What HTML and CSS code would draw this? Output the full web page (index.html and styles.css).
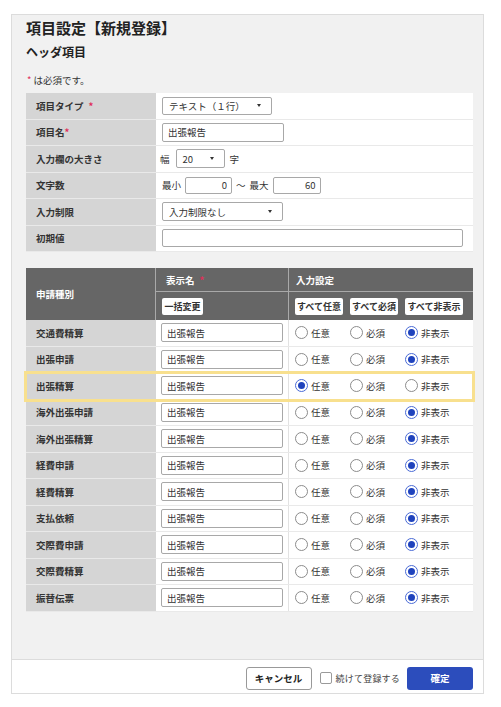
FILE: index.html
```html
<html lang="ja"><head>
  <meta charset="UTF-8">
  <meta name="viewport" content="width=device-width, initial-scale=1.0">
  <title>項目設定</title>
  <link rel="stylesheet" href="styles.css">
</head>
<body>
  <div class="dialog">
    <div class="dialog-body">
      <h1 class="dialog-title">項目設定【新規登録】</h1>
      <h2 class="section-title">ヘッダ項目</h2>
      <p class="note"><span class="req">*</span> は必須です。</p>

      <!-- 基本設定 -->
      <div class="form-table">
        <div class="form-row">
          <div class="form-label"><span>項目タイプ</span><span class="req spaced">*</span></div>
          <div class="form-value">
            <div class="select select-type">テキスト（１行）<span class="caret"></span></div>
          </div>
        </div>
        <div class="form-row">
          <div class="form-label"><span>項目名</span><span class="req">*</span></div>
          <div class="form-value"><input class="text-input" type="text" value="出張報告"></div>
        </div>
        <div class="form-row">
          <div class="form-label">入力欄の大きさ</div>
          <div class="form-value">
            <span class="unit-before">幅</span>
            <div class="select select-size">20<span class="caret"></span></div>
            <span class="unit-after">字</span>
          </div>
        </div>
        <div class="form-row">
          <div class="form-label">文字数</div>
          <div class="form-value gap">
            <span>最小</span>
            <input class="text-input num num-min" type="text" value="0">
            <span class="tilde">～</span>
            <span>最大</span>
            <input class="text-input num num-max" type="text" value="60">
          </div>
        </div>
        <div class="form-row">
          <div class="form-label">入力制限</div>
          <div class="form-value">
            <div class="select select-limit">入力制限なし<span class="caret"></span></div>
          </div>
        </div>
        <div class="form-row">
          <div class="form-label">初期値</div>
          <div class="form-value"><input class="text-input wide" type="text" value=""></div>
        </div>
      </div>

      <!-- 申請種別ごとの設定 -->
      <div class="kind-table">
        <div class="kind-head">
          <div class="head-kind">申請種別</div>
          <div class="head-name"><span>表示名</span><span class="req spaced">*</span></div>
          <div class="head-setting">入力設定</div>
          <div class="head-name-tools"><button class="mini-btn w41">一括変更</button></div>
          <div class="head-setting-tools">
            <button class="mini-btn w48">すべて任意</button>
            <button class="mini-btn w48">すべて必須</button>
            <button class="mini-btn w58">すべて非表示</button>
          </div>
        </div>

        <div class="kind-row">
          <div class="kind-label">交通費精算</div>
          <div class="kind-name"><input class="text-input" type="text" value="出張報告"></div>
          <div class="kind-setting">
            <span class="radio-opt"><span class="radio"></span>任意</span>
            <span class="radio-opt"><span class="radio"></span>必須</span>
            <span class="radio-opt"><span class="radio on"></span>非表示</span>
          </div>
        </div>
        <div class="kind-row">
          <div class="kind-label">出張申請</div>
          <div class="kind-name"><input class="text-input" type="text" value="出張報告"></div>
          <div class="kind-setting">
            <span class="radio-opt"><span class="radio"></span>任意</span>
            <span class="radio-opt"><span class="radio"></span>必須</span>
            <span class="radio-opt"><span class="radio on"></span>非表示</span>
          </div>
        </div>
        <div class="kind-row current">
          <div class="kind-label">出張精算</div>
          <div class="kind-name"><input class="text-input" type="text" value="出張報告"></div>
          <div class="kind-setting">
            <span class="radio-opt"><span class="radio on"></span>任意</span>
            <span class="radio-opt"><span class="radio"></span>必須</span>
            <span class="radio-opt"><span class="radio"></span>非表示</span>
          </div>
        </div>
        <div class="kind-row">
          <div class="kind-label">海外出張申請</div>
          <div class="kind-name"><input class="text-input" type="text" value="出張報告"></div>
          <div class="kind-setting">
            <span class="radio-opt"><span class="radio"></span>任意</span>
            <span class="radio-opt"><span class="radio"></span>必須</span>
            <span class="radio-opt"><span class="radio on"></span>非表示</span>
          </div>
        </div>
        <div class="kind-row">
          <div class="kind-label">海外出張精算</div>
          <div class="kind-name"><input class="text-input" type="text" value="出張報告"></div>
          <div class="kind-setting">
            <span class="radio-opt"><span class="radio"></span>任意</span>
            <span class="radio-opt"><span class="radio"></span>必須</span>
            <span class="radio-opt"><span class="radio on"></span>非表示</span>
          </div>
        </div>
        <div class="kind-row">
          <div class="kind-label">経費申請</div>
          <div class="kind-name"><input class="text-input" type="text" value="出張報告"></div>
          <div class="kind-setting">
            <span class="radio-opt"><span class="radio"></span>任意</span>
            <span class="radio-opt"><span class="radio"></span>必須</span>
            <span class="radio-opt"><span class="radio on"></span>非表示</span>
          </div>
        </div>
        <div class="kind-row">
          <div class="kind-label">経費精算</div>
          <div class="kind-name"><input class="text-input" type="text" value="出張報告"></div>
          <div class="kind-setting">
            <span class="radio-opt"><span class="radio"></span>任意</span>
            <span class="radio-opt"><span class="radio"></span>必須</span>
            <span class="radio-opt"><span class="radio on"></span>非表示</span>
          </div>
        </div>
        <div class="kind-row">
          <div class="kind-label">支払依頼</div>
          <div class="kind-name"><input class="text-input" type="text" value="出張報告"></div>
          <div class="kind-setting">
            <span class="radio-opt"><span class="radio"></span>任意</span>
            <span class="radio-opt"><span class="radio"></span>必須</span>
            <span class="radio-opt"><span class="radio on"></span>非表示</span>
          </div>
        </div>
        <div class="kind-row">
          <div class="kind-label">交際費申請</div>
          <div class="kind-name"><input class="text-input" type="text" value="出張報告"></div>
          <div class="kind-setting">
            <span class="radio-opt"><span class="radio"></span>任意</span>
            <span class="radio-opt"><span class="radio"></span>必須</span>
            <span class="radio-opt"><span class="radio on"></span>非表示</span>
          </div>
        </div>
        <div class="kind-row">
          <div class="kind-label">交際費精算</div>
          <div class="kind-name"><input class="text-input" type="text" value="出張報告"></div>
          <div class="kind-setting">
            <span class="radio-opt"><span class="radio"></span>任意</span>
            <span class="radio-opt"><span class="radio"></span>必須</span>
            <span class="radio-opt"><span class="radio on"></span>非表示</span>
          </div>
        </div>
        <div class="kind-row">
          <div class="kind-label">振替伝票</div>
          <div class="kind-name"><input class="text-input" type="text" value="出張報告"></div>
          <div class="kind-setting">
            <span class="radio-opt"><span class="radio"></span>任意</span>
            <span class="radio-opt"><span class="radio"></span>必須</span>
            <span class="radio-opt"><span class="radio on"></span>非表示</span>
          </div>
        </div>
      </div>
    </div>

    <div class="dialog-footer">
      <button class="btn btn-cancel">キャンセル</button>
      <label class="continue"><span class="checkbox"></span>続けて登録する</label>
      <button class="btn btn-ok">確定</button>
    </div>
  </div>
</body></html>
```

FILE: styles.css
```css
body {
  margin: 0;
  background: #fff;
  font-family: "Noto Sans CJK JP", "Noto Sans", sans-serif;
  color: #333;
}

.dialog {
  margin: 14px 0 0 11px;
  width: 473px;
  height: 680px;
  box-sizing: border-box;
  border: 1px solid #dcdcdc;
  background: #f1f1f1;
  display: flex;
  flex-direction: column;
}
.dialog-body {
  flex: 1;
  padding: 3px 10px 0 14px;
}

.dialog-title {
  margin: 0;
  font-size: 15px;
  line-height: 20px;
  font-weight: bold;
  color: #222;
}
.section-title {
  margin: 6px 0 0;
  font-size: 12px;
  line-height: 16px;
  font-weight: bold;
  color: #222;
}
.note {
  margin: 13px 0 0 1px;
  font-size: 9.5px;
  line-height: 14px;
}
.req {
  color: #e0305a;
}
.req.spaced {
  margin-left: 5px;
}

/* 基本設定テーブル */
.form-table {
  margin-top: 6px;
}
.form-row {
  display: grid;
  grid-template-columns: 130px 1fr;
  height: 26.5px;
  box-sizing: border-box;
  border-bottom: 1px solid #e9e9e9;
}
.form-label {
  display: flex;
  align-items: center;
  padding-left: 10px;
  background: #d5d5d5;
  font-size: 9.5px;
  font-weight: bold;
}
.form-value {
  display: flex;
  align-items: center;
  padding-left: 6px;
  background: #fff;
  font-size: 9.5px;
}
.form-value.gap span {
  margin-right: 4px;
}
.form-value .tilde {
  margin-left: 4px;
  margin-right: 4px;
}

.text-input {
  width: 122px;
  height: 19px;
  box-sizing: border-box;
  border: 1px solid #a8a8a8;
  border-radius: 2px;
  padding: 0 5px;
  background: #fff;
  font-family: inherit;
  font-size: 9.5px;
  color: #333;
}
.text-input.num {
  text-align: right;
  padding-right: 4px;
  height: 17px;
}
.num-min { width: 47px; }
.num-max { width: 48px; }
.text-input.wide {
  width: 301px;
  height: 18px;
}

.select {
  display: flex;
  align-items: center;
  justify-content: space-between;
  height: 18px;
  box-sizing: border-box;
  border: 1px solid #a8a8a8;
  border-radius: 2px;
  padding: 0 10px 0 6px;
  background: #fff;
  font-size: 9.5px;
}
.select-type { width: 110px; }
.select-size { width: 49px; height: 19px; }
.select-limit { width: 121px; height: 19px; }
.caret {
  width: 0;
  height: 0;
  border-left: 2.5px solid transparent;
  border-right: 2.5px solid transparent;
  border-top: 3px solid #333;
}
.unit-before {
  margin: 0 6px 0 -2px;
}
.unit-after {
  margin-left: 5px;
}

/* 申請種別テーブル */
.kind-table {
  margin-top: 16px;
}
.kind-head {
  display: grid;
  grid-template-columns: 130px 133px 1fr;
  grid-template-rows: 24px 28px;
  background: #666;
  color: #fff;
  font-size: 9.5px;
  font-weight: bold;
}
.kind-head > div {
  display: flex;
  align-items: center;
  box-sizing: border-box;
}
.head-kind {
  grid-row: 1 / 3;
  padding-left: 10px;
  border-right: 1px solid #a9a9a9;
}
.head-name {
  padding-left: 10px;
  border-right: 1px solid #a9a9a9;
  border-bottom: 1px solid #a9a9a9;
}
.head-setting {
  padding-left: 7px;
  border-bottom: 1px solid #a9a9a9;
}
.head-name-tools {
  padding-left: 6px;
  border-right: 1px solid #a9a9a9;
}
.head-setting-tools {
  padding-left: 6px;
  gap: 7px;
}
.mini-btn {
  height: 17px;
  padding: 0;
  border: none;
  border-radius: 2px;
  background: #fff;
  color: #333;
  font-family: inherit;
  font-size: 9px;
  font-weight: bold;
}
.w41 { width: 41px; }
.w48 { width: 48px; }
.w58 { width: 58px; }

.kind-row {
  display: grid;
  grid-template-columns: 130px 133px 1fr;
  height: 26.5px;
  box-sizing: border-box;
  border-bottom: 1px solid #e9e9e9;
  font-size: 9.5px;
}
.kind-row.current {
  position: relative;
  z-index: 1;
  outline: 3px solid #f8e08e;
  outline-offset: -1px;
}
.kind-row > div {
  display: flex;
  align-items: center;
}
.kind-label {
  padding-left: 10px;
  background: #d5d5d5;
  font-weight: bold;
}
.kind-name {
  padding-left: 5px;
  background: #fff;
  border-right: 1px solid #e2e2e2;
}
.kind-setting {
  padding-left: 6px;
  background: #fff;
}
.radio-opt {
  display: inline-flex;
  align-items: center;
  width: 55px;
  gap: 3px;
}
.radio {
  position: relative;
  width: 13px;
  height: 13px;
  box-sizing: border-box;
  border: 1px solid #8c8c8c;
  border-radius: 50%;
  background: #fff;
}
.radio.on {
  border-color: #4a6bd6;
}
.radio.on::after {
  content: "";
  position: absolute;
  left: 2px;
  top: 2px;
  width: 7px;
  height: 7px;
  border-radius: 50%;
  background: #1f43bd;
}

/* フッター */
.dialog-footer {
  height: 34px;
  box-sizing: border-box;
  border-top: 1px solid #dcdcdc;
  padding: 3px 10px 0 0;
  background: #fff;
  display: flex;
  align-items: center;
  justify-content: flex-end;
}
.btn {
  width: 66px;
  height: 23px;
  border-radius: 3px;
  font-family: inherit;
  font-size: 9.5px;
  font-weight: bold;
}
.btn-cancel {
  border: 1px solid #999;
  background: #fff;
  color: #222;
}
.btn-ok {
  border: none;
  background: #2c4dbc;
  color: #fff;
}
.continue {
  display: flex;
  align-items: center;
  margin: 0 7px 0 8px;
  font-size: 9px;
  letter-spacing: 0.2px;
  color: #444;
}
.checkbox {
  width: 12px;
  height: 12px;
  box-sizing: border-box;
  border: 1px solid #9a9a9a;
  border-radius: 2px;
  background: #fff;
  margin-right: 4px;
}
```
